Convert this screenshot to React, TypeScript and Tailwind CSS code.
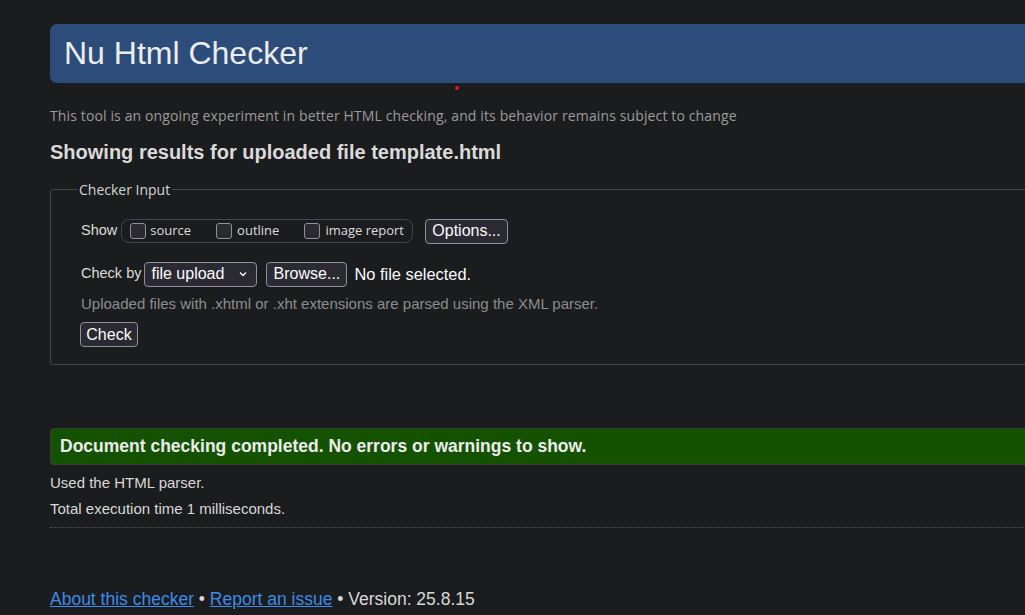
import React from "react";

const arial = { fontFamily: '"Liberation Sans", Arial, sans-serif' };

export default function App() {
  return (
    <div className="relative w-[1025px] h-[615px] overflow-hidden bg-[#1b1c1e] text-[#dcdcdc] font-['Liberation_Sans',Arial,sans-serif]">
      <div className="pl-[50px] pt-[24px] w-[1150px]">
        <div className="h-[59px] rounded-l-[7px] bg-[#2c4c7a] flex items-center pl-[14px]">
          <h1 className="text-[32px] leading-none text-[#ececec] pb-[1px]">Nu Html Checker</h1>
        </div>
        <p className="mt-[24px] text-[14px] leading-[18px] text-[#9b9b9b] font-['Open_Sans',sans-serif] tracking-[0.13px]">
          This tool is an ongoing experiment in better HTML checking, and its behavior remains subject to change
        </p>
        <h2 className="mt-[16px] text-[20px] leading-[22px] font-bold text-[#dadada]">
          Showing results for uploaded file template.html
        </h2>
        <fieldset className="mt-[16px] border border-[#444548] rounded-[3px] pl-[30px] pr-0 pb-[17px] pt-[18px] min-w-0">
          <legend className="ml-[-4px] px-[2px] text-[14px] text-[#d4d4d4] font-['Open_Sans',sans-serif]">
            Checker Input
          </legend>
          <div className="flex items-center h-[26px]">
            <span className="text-[14.5px] mr-[4px]">Show</span>
            <div className="flex items-center h-[24px] w-[292px] border border-[#444548] rounded-[8px] pl-[8px] font-['Open_Sans',sans-serif] text-[13px]">
              <span className="w-[16px] h-[16px] rounded-[3px] border border-[#8f8f9d] bg-[#2b2a33] mr-[4px]"></span>
              <span className="mr-[25px]">source</span>
              <span className="w-[16px] h-[16px] rounded-[3px] border border-[#8f8f9d] bg-[#2b2a33] mr-[5px]"></span>
              <span className="mr-[25px]">outline</span>
              <span className="w-[16px] h-[16px] rounded-[3px] border border-[#8f8f9d] bg-[#2b2a33] mr-[5px]"></span>
              <span>image report</span>
            </div>
            <button className="ml-[12px] h-[25px] px-[6px] rounded-[4px] border border-[#8f8f9d] bg-[#2b2a33] text-[16px] text-[#fbfbfe] leading-none">
              Options...
            </button>
          </div>
          <div className="flex items-center h-[26px] mt-[17px]">
            <span className="text-[14.5px] mr-[3px]">Check by</span>
            <div className="flex items-center h-[25px] w-[113px] pl-[6px] pr-[8px] rounded-[4px] border border-[#8f8f9d] bg-[#2b2a33] text-[16px] text-[#fbfbfe]">
              <span className="flex-1">file upload</span>
              <svg width="10" height="10" viewBox="0 0 10 10" className="mb-[1px]">
                <path d="M2 3.5 L5 6.5 L8 3.5" fill="none" stroke="#fbfbfe" strokeWidth="1.3" />
              </svg>
            </div>
            <button className="ml-[9px] h-[25px] w-[81px] rounded-[4px] border border-[#8f8f9d] bg-[#2b2a33] text-[16px] text-[#fbfbfe] leading-none">
              Browse...
            </button>
            <span className="ml-[7px] text-[16.4px] text-[#fbfbfe]">No file selected.</span>
          </div>
          <p className="mt-[8px] text-[15px] leading-[18px] text-[#8d8d8d]">
            Uploaded files with .xhtml or .xht extensions are parsed using the XML parser.
          </p>
          <button className="mt-[9px] ml-[-1px] h-[25px] w-[58px] rounded-[4px] border border-[#8f8f9d] bg-[#2b2a33] text-[16px] text-[#fbfbfe] leading-none">
            Check
          </button>
        </fieldset>
        <div className="mt-[63px] h-[37px] rounded-l-[4px] border border-[#3a3a3a] bg-[#145200] flex items-center pl-[9px]">
          <span className="text-[17.5px] font-bold text-[#ececec]">
            Document checking completed. No errors or warnings to show.
          </span>
        </div>
        <p className="mt-[9px] text-[15px] leading-[18px] text-[#d8d8d8]">Used the HTML parser.</p>
        <p className="mt-[8px] text-[15px] leading-[18px] text-[#d8d8d8]">Total execution time 1 milliseconds.</p>
        <div className="mt-[9px] border-t border-dotted border-[#555]"></div>
        <p className="mt-[60px] text-[17.5px] leading-[22px] text-[#d8d8d8]" style={arial}>
          <a className="text-[#3b8bea] underline">About this checker</a> • <a className="text-[#3b8bea] underline">Report an issue</a> • Version: 25.8.15
        </p>
      </div>
      <div className="absolute left-[455px] top-[86px] w-[4px] h-[4px] rounded-full bg-[#e01b1b]"></div>
    </div>
  );
}
